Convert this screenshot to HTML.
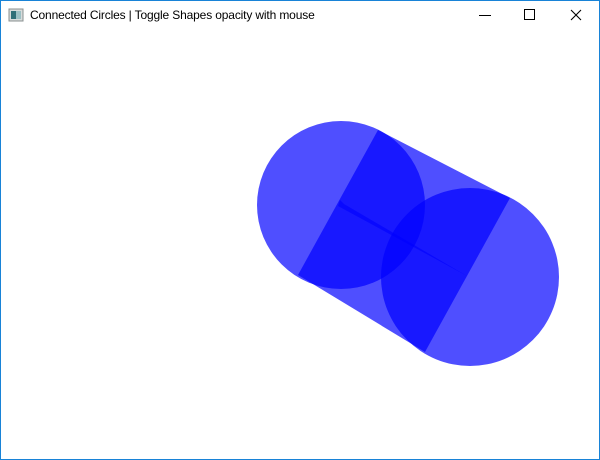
<!DOCTYPE html>
<html><head><style>
html,body{margin:0;padding:0;background:#fff;}
.win{position:absolute;left:0;top:0;width:598px;height:458px;border:1px solid #1883d7;background:#fff;overflow:hidden;}
.title{position:absolute;left:30px;top:8px;font:12px "Liberation Sans",sans-serif;letter-spacing:-0.15px;color:#000;}
svg{position:absolute;left:0;top:0;}
</style></head><body>
<div class="win"></div>
<svg width="600" height="460" viewBox="0 0 600 460">
<g>
<rect x="9" y="9" width="14" height="12" fill="#d8dcdc" stroke="#8a9090" stroke-width="1"/>
<rect x="11" y="11" width="5" height="8" fill="#2f6f78"/>
<rect x="16" y="11" width="5" height="8" fill="#9cc0c4"/>
</g>
<line x1="479" y1="15.5" x2="491" y2="15.5" stroke="#000" stroke-width="1"/>
<rect x="524.5" y="9.5" width="10" height="10" fill="none" stroke="#000" stroke-width="1"/>
<path d="M571 10 L581 20 M581 10 L571 20" stroke="#000" stroke-width="1.1"/>
<g fill="#0000ff" fill-opacity="0.69">
<circle cx="341" cy="205" r="84"/>
<circle cx="470" cy="277" r="89"/>
<polygon points="378,130 510,198 425,352 298,275"/>
</g>
<polygon points="340,200 344,204 467,276 338,206" fill="#0000ff" fill-opacity="0.6"/>
</svg>
<div class="title">Connected Circles | Toggle Shapes opacity with mouse</div>
</body></html>
